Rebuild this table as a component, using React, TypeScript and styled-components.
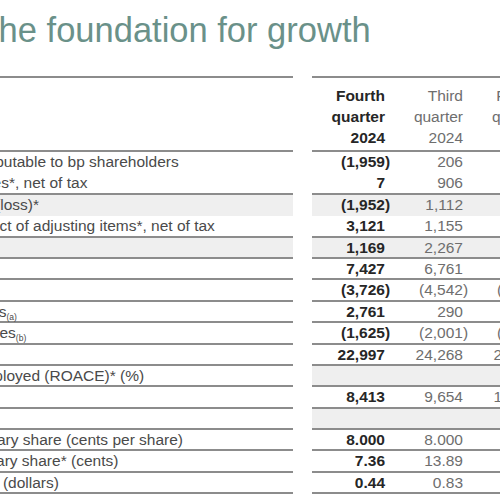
import React from 'react';
import styled, { createGlobalStyle } from 'styled-components';

const GlobalStyle = createGlobalStyle`
  html, body {
    margin: 0;
    padding: 0;
    background: #ffffff;
    overflow: hidden;
  }
  body {
    font-family: "Liberation Sans", Arial, Helvetica, sans-serif;
  }
`;

const LINE = '#8c8c8c';
const SHADE = '#efefef';
const ROW_H = 21.4;

const Page = styled.div`
  width: 500px;
  height: 500px;
  overflow: hidden;
  background: #ffffff;
`;

const Title = styled.h1`
  margin: 0 0 0 -11px;
  box-sizing: border-box;
  height: 76px;
  padding-top: 10px;
  font-family: "Liberation Sans", Arial, sans-serif;
  font-weight: 400;
  font-size: 34.5px;
  line-height: 40px;
  color: #6a9189;
  white-space: nowrap;
`;

const Table = styled.div`
  margin-left: -209px;
  width: 755px;
  font-size: 15.5px;
`;

const Grid = styled.div`
  display: grid;
  grid-template-columns: 502px 19px 78px 78px 78px;
`;

const HeadCell = styled.div<{ $gap?: boolean; $bold?: boolean }>`
  box-sizing: border-box;
  border-top: 2px solid ${(p) => (p.$gap ? 'transparent' : LINE)};
  border-bottom: 2px solid ${(p) => (p.$gap ? 'transparent' : LINE)};
  padding: 6.5px 5px 1.3px 0;
  text-align: right;
  line-height: ${ROW_H}px;
  font-weight: ${(p) => (p.$bold ? 700 : 400)};
  color: ${(p) => (p.$bold ? '#262626' : '#6e6e6e')};
`;

const HeadLine = styled.div`
  white-space: nowrap;
`;

const Cell = styled.div<{ $line?: boolean; $shade?: boolean }>`
  box-sizing: border-box;
  height: ${ROW_H}px;
  border-bottom: 2px solid ${(p) => (p.$line ? LINE : 'transparent')};
  background: ${(p) => (p.$shade ? SHADE : 'transparent')};
  line-height: ${ROW_H - 2}px;
  white-space: nowrap;
`;

const LabelCell = styled(Cell)`
  color: #4a4a4a;
  text-align: left;
`;

const GapCell = styled.div`
  height: ${ROW_H}px;
`;

const NumCell = styled(Cell)<{ $bold?: boolean }>`
  text-align: right;
  padding-right: 5px;
  font-weight: ${(p) => (p.$bold ? 700 : 400)};
  color: ${(p) => (p.$bold ? '#262626' : '#6e6e6e')};
`;

const Hang = styled.span`
  margin-right: -0.333em;
`;

const Sub = styled.sub`
  font-size: 0.55em;
  vertical-align: -0.35em;
  line-height: 0;
`;

type RowData = {
  label: string;
  sub?: string;
  v: [string, string, string];
  line?: boolean;
  shade?: 'all' | 'data';
};

const rows: RowData[] = [
  { label: 'Profit (loss) for the period attributable to bp shareholders', v: ['(1,959)', '206', '371'] },
  { label: 'Inventory holding (gains) losses*, net of tax', v: ['7', '906', '1,080'], line: true },
  { label: 'Replacement cost (RC) profit (loss)*', v: ['(1,952)', '1,112', '1,451'], shade: 'all' },
  { label: 'Net (favourable) adverse impact of adjusting items*, net of tax', v: ['3,121', '1,155', '1,538'], line: true },
  { label: 'Underlying RC profit*', v: ['1,169', '2,267', '2,989'], line: true, shade: 'all' },
  { label: 'Operating cash flow*', v: ['7,427', '6,761', '8,665'], line: true },
  { label: 'Capital expenditure*', v: ['(3,726)', '(4,542)', '(4,631)'], line: true },
  { label: 'Divestment and other proceeds', sub: '(a)', v: ['2,761', '290', '1,784'], line: true },
  { label: 'Net issue (repurchase) of shares', sub: '(b)', v: ['(1,625)', '(2,001)', '(1,525)'], line: true },
  { label: 'Net debt*', sub: '(c)', v: ['22,997', '24,268', '20,912'], line: true },
  { label: 'Return on average capital employed (ROACE)* (%)', v: ['', '', ''], line: true, shade: 'data' },
  { label: 'Adjusted EBITDA*', v: ['8,413', '9,654', '10,728'], line: true },
  { label: 'Dividends', v: ['', '', ''], line: true, shade: 'data' },
  { label: 'Announced dividend per ordinary share (cents per share)', v: ['8.000', '8.000', '7.270'], line: true },
  { label: 'Underlying RC profit per ordinary share* (cents)', v: ['7.36', '13.89', '17.52'], line: true },
  { label: 'Underlying RC profit per ADS* (dollars)', v: ['0.44', '0.83', '1.05'], line: true },
];

const heads: { lines: string[]; bold: boolean }[] = [
  { lines: ['Fourth', 'quarter', '2024'], bold: true },
  { lines: ['Third', 'quarter', '2024'], bold: false },
  { lines: ['Fourth', 'quarter', '2023'], bold: false },
];

function Num({ value }: { value: string }) {
  if (value.startsWith('(') && value.endsWith(')')) {
    return (
      <>
        {value.slice(0, -1)}
        <Hang>)</Hang>
      </>
    );
  }
  return <>{value}</>;
}

export default function App() {
  return (
    <>
      <GlobalStyle />
      <Page>
        <Title>the foundation for growth</Title>
        <Table>
          <Grid>
            <HeadCell />
            <HeadCell $gap />
            {heads.map((h, i) => (
              <HeadCell key={i} $bold={h.bold}>
                {h.lines.map((l, j) => (
                  <HeadLine key={j}>{l}</HeadLine>
                ))}
              </HeadCell>
            ))}
          </Grid>
          {rows.map((r, i) => (
            <Grid key={i}>
              <LabelCell $line={r.line} $shade={r.shade === 'all'}>
                {r.label}
                {r.sub && <Sub>{r.sub}</Sub>}
              </LabelCell>
              <GapCell />
              {r.v.map((v, j) => (
                <NumCell key={j} $bold={j === 0} $line={r.line} $shade={!!r.shade}>
                  <Num value={v} />
                </NumCell>
              ))}
            </Grid>
          ))}
        </Table>
      </Page>
    </>
  );
}
